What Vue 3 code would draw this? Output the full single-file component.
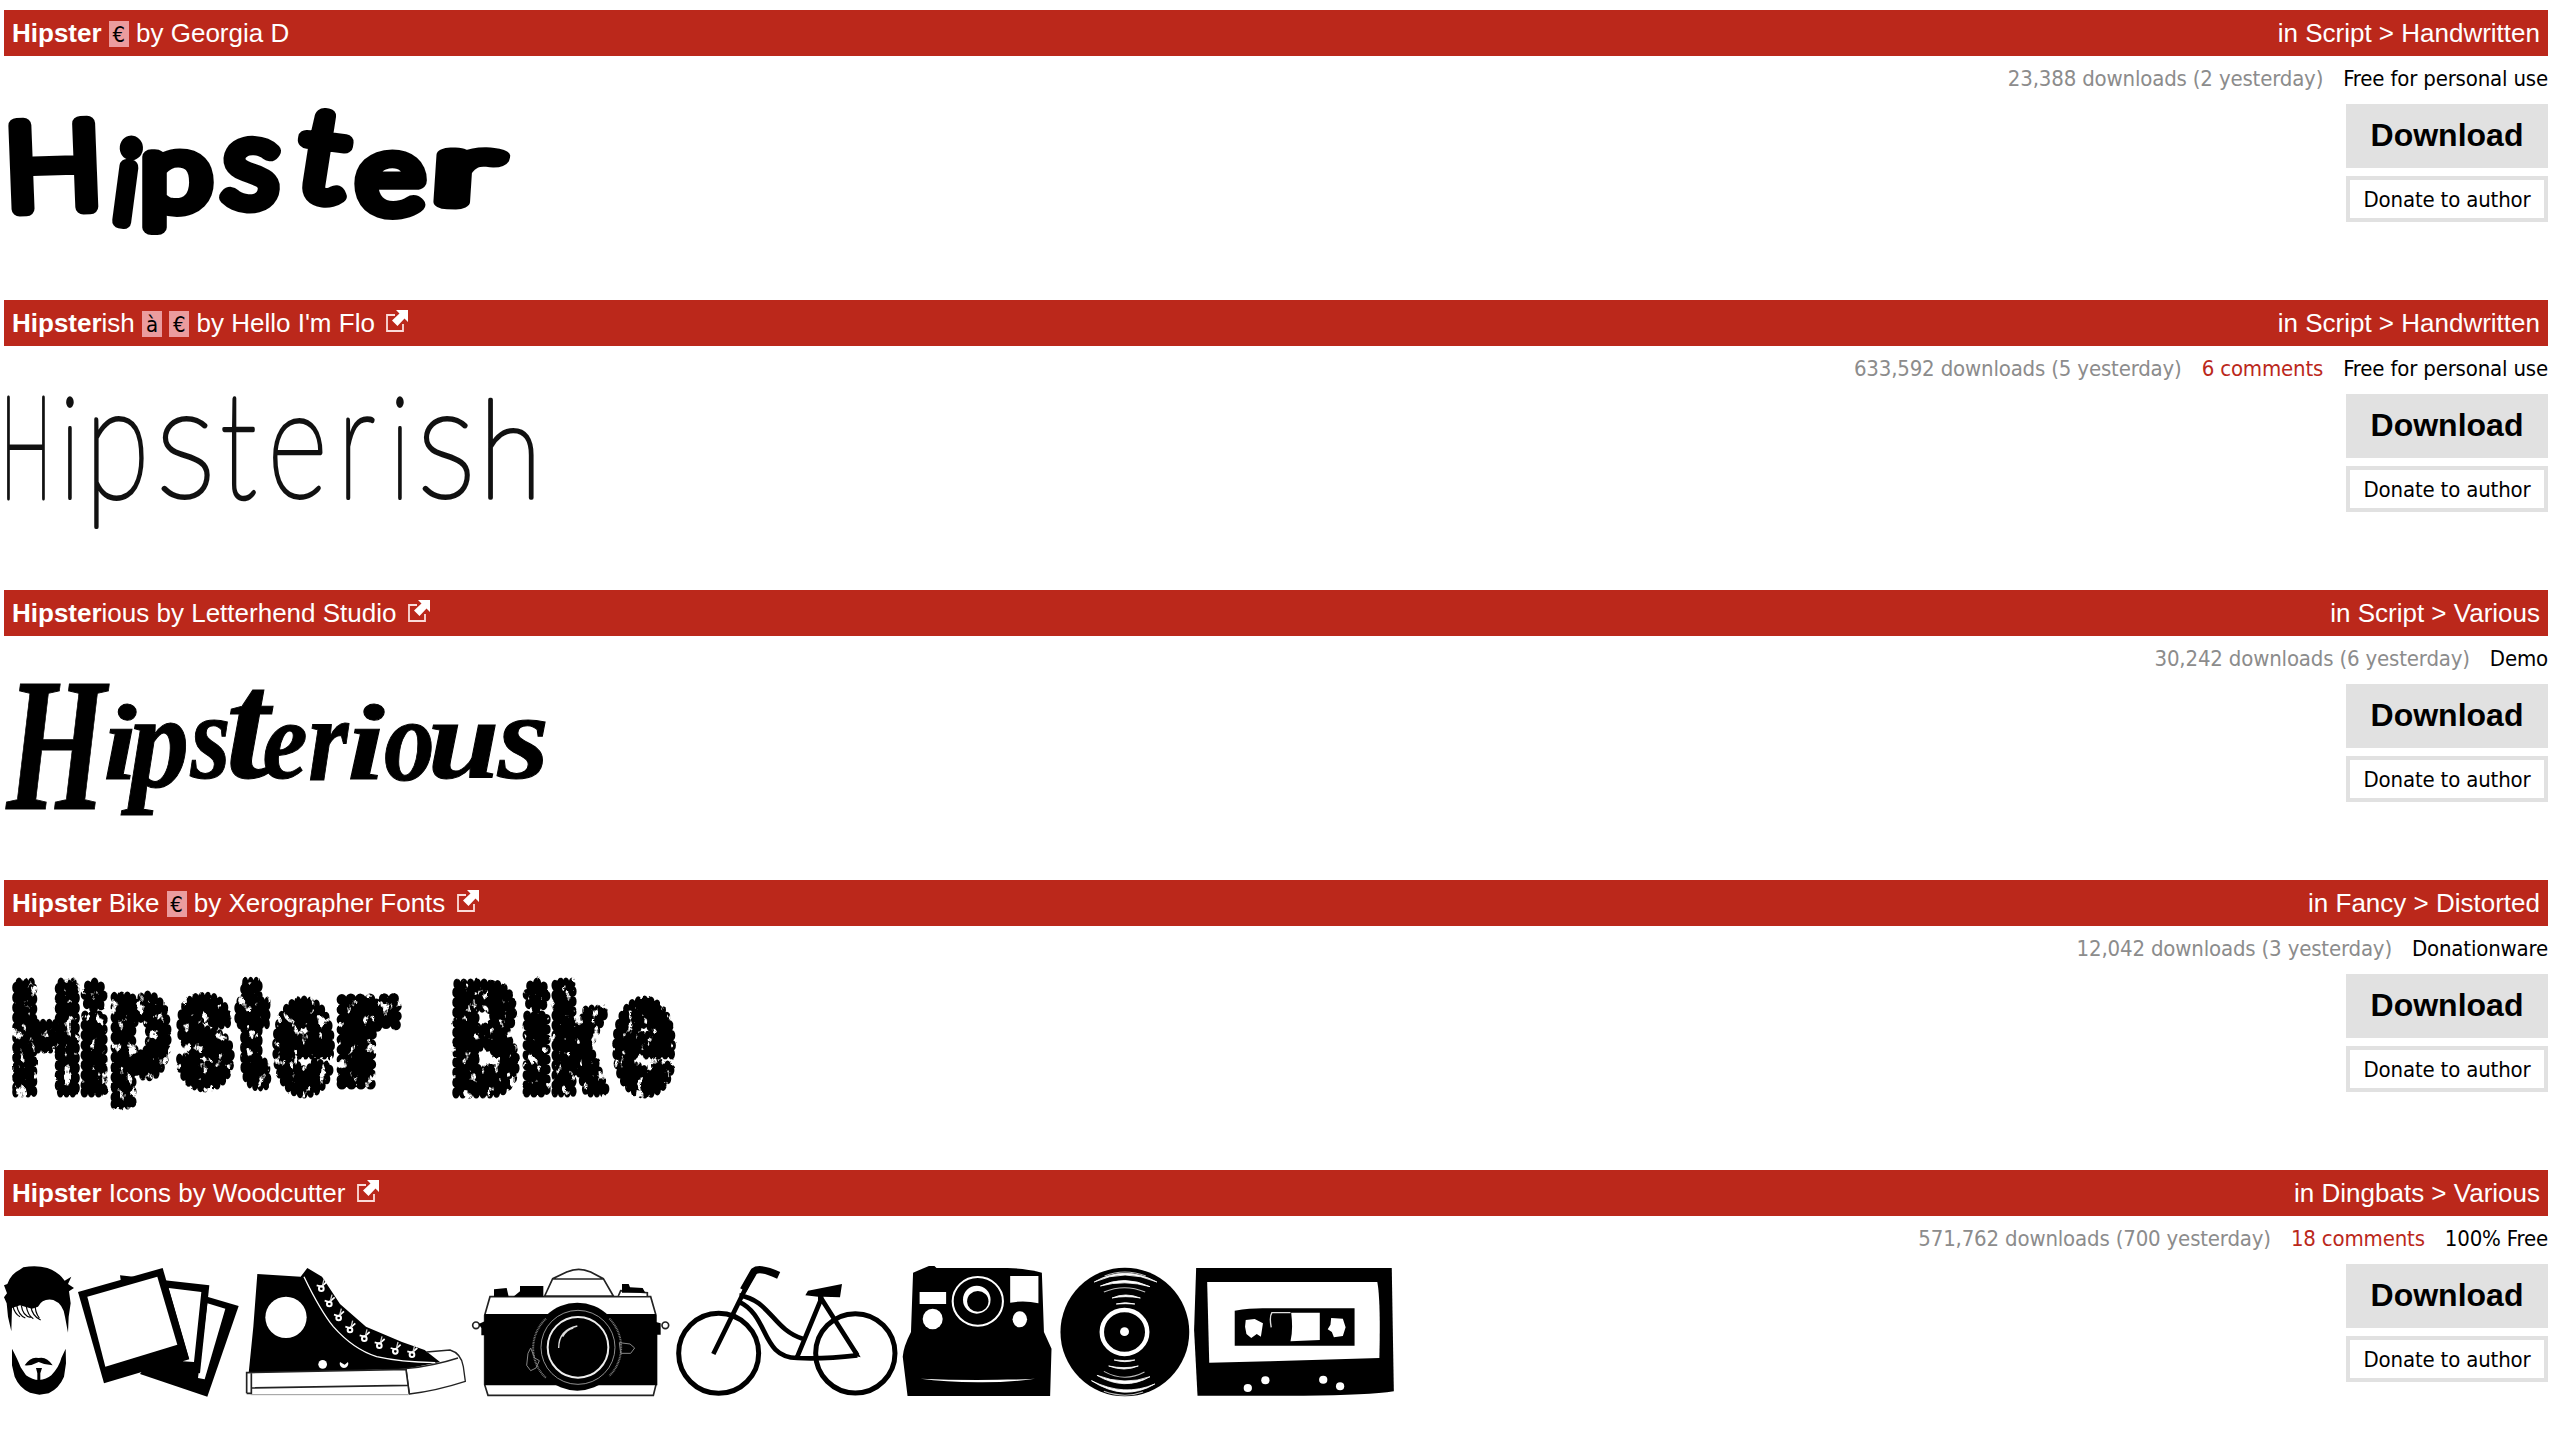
<script setup>
const canvas = document.createElement('canvas').getContext('2d')

// Fits every glyph of a word into its [left, top, right, bottom] box.
function fit(font, stroke, boxes) {
  return boxes.map(([char, left, top, right, bottom, turn = 0]) => {
    canvas.font = font.replace('SIZE', '200px')
    const m = canvas.measureText(char)
    const size = (200 * (bottom - top - stroke)) / (m.actualBoundingBoxAscent + m.actualBoundingBoxDescent)
    const s = size / 200
    const inkWidth = (m.actualBoundingBoxRight + m.actualBoundingBoxLeft) * s
    const k = (right - left) / (inkWidth + stroke)
    return {
      char,
      size,
      turn,
      x: left + k * (stroke / 2 + m.actualBoundingBoxLeft * s),
      y: bottom - stroke / 2 - m.actualBoundingBoxDescent * s,
      length: m.width * s * k
    }
  })
}

const fonts = [
  {
    bold: 'Hipster', rest: '', badges: ['€'], author: 'Georgia D', link: false,
    category: 'Script', sub: 'Handwritten', downloads: '23,388 downloads (2 yesterday)', license: 'Free for personal use',
    kind: 'marker',
    glyphs: fit('300 SIZE Lato', 15, [
      ['H', 11, 118, 99, 217, -2], ['i', 110, 133, 134, 227, 8], ['p', 142, 149, 214, 235],
      ['s', 218, 134, 279, 212, 4], ['t', 289, 105, 347, 204, 8], ['e', 354, 149, 427, 220], ['r', 433, 146, 508, 209, 2]
    ])
  },
  {
    bold: 'Hipster', rest: 'ish', badges: ['à', '€'], author: "Hello I'm Flo", link: true,
    category: 'Script', sub: 'Handwritten', downloads: '633,592 downloads (5 yesterday)', comments: '6 comments', license: 'Free for personal use',
    kind: 'thin',
    glyphs: fit('100 SIZE Lato', 4, [
      ['H', 7, 105, 45, 212], ['i', 66, 105, 74, 210], ['p', 94, 126, 144, 239],
      ['s', 161, 126, 210, 211], ['t', 222, 106, 256, 211], ['e', 273, 128, 323, 210],
      ['r', 346, 125, 375, 210], ['i', 396, 105, 404, 210], ['s', 422, 126, 470, 211], ['h', 488, 107, 534, 210]
    ])
  },
  {
    bold: 'Hipster', rest: 'ious', badges: [], author: 'Letterhend Studio', link: true,
    category: 'Script', sub: 'Various', downloads: '30,242 downloads (6 yesterday)', license: 'Demo',
    kind: 'script',
    glyphs: fit('italic bold SIZE "Liberation Serif"', 1, [
      ['H', 5, 103, 110, 229], ['i', 106, 124, 137, 200], ['p', 120, 143, 186, 236],
      ['s', 189, 140, 228, 200], ['t', 230, 110, 274, 200], ['e', 264, 145, 306, 200],
      ['r', 310, 142, 350, 200], ['i', 350, 124, 385, 200], ['o', 385, 144, 432, 202],
      ['u', 432, 145, 496, 200], ['s', 496, 140, 546, 200]
    ])
  },
  {
    bold: 'Hipster', rest: ' Bike', badges: ['€'], author: 'Xerographer Fonts', link: true,
    category: 'Fancy', sub: 'Distorted', downloads: '12,042 downloads (3 yesterday)', license: 'Donationware',
    kind: 'grunge',
    glyphs: fit('900 SIZE Inter', 11, [
      ['H', 12, 107, 80, 227], ['i', 80, 107, 108, 227], ['p', 110, 121, 172, 240],
      ['s', 175, 121, 235, 222], ['t', 234, 107, 272, 222], ['e', 272, 125, 335, 228], ['r', 336, 122, 402, 219],
      ['B', 452, 108, 520, 228], ['i', 522, 107, 551, 227], ['k', 551, 107, 611, 227], ['e', 612, 125, 676, 228]
    ])
  },
  {
    bold: 'Hipster', rest: ' Icons', badges: [], author: 'Woodcutter', link: true,
    category: 'Dingbats', sub: 'Various', downloads: '571,762 downloads (700 yesterday)', comments: '18 comments', license: '100% Free',
    kind: 'icons'
  }
]

const eyelets = [[968, 378], [992, 424], [1020, 466], [1054, 502], [1097, 528], [1142, 549], [1190, 566], [1240, 576]]
</script>

<template>
  <main class="page">
    <article v-for="f in fonts" :key="f.rest" class="font">
      <header class="bar">
        <div class="name">
          <b>{{ f.bold }}</b>{{ f.rest }}<template v-for="b in f.badges" :key="b">{{ ' ' }}<span class="badge">{{ b }}</span></template>
          by {{ f.author }}
          <svg v-if="f.link" class="ext" viewBox="0 0 22 22">
            <path d="M9 5H1V21H17V14" fill="none" stroke="#fbdcd9" stroke-width="1.8" />
            <path d="M10 0H22V12L18.5 8.5L11.5 16L6 10.5L13.5 3.5Z" fill="#fff" />
          </svg>
        </div>
        <div class="category">in {{ f.category }} &gt; {{ f.sub }}</div>
      </header>
      <div class="body">
        <svg v-if="f.glyphs" class="preview" :class="f.kind" viewBox="0 90 700 160" width="700" height="160">
          <defs v-if="f.kind === 'grunge'">
            <filter id="worn" x="0" y="90" width="700" height="160" filterUnits="userSpaceOnUse">
              <feTurbulence type="fractalNoise" baseFrequency="0.11 0.07" numOctaves="4" seed="8" result="noise" />
              <feColorMatrix in="noise" type="matrix" values="0 0 0 0 0  0 0 0 0 0  0 0 0 0 0  12 0 0 0 -7.7" result="specks" />
              <feComposite in="SourceGraphic" in2="specks" operator="out" result="worn" />
              <feDisplacementMap in="worn" in2="noise" scale="2" xChannelSelector="R" yChannelSelector="G" />
            </filter>
          </defs>
          <text><template v-for="(g, i) in f.glyphs" :key="i"><tspan
            :x="g.x" :y="g.y" :rotate="g.turn" :textLength="g.length" lengthAdjust="spacingAndGlyphs"
            :style="{ fontSize: g.size + 'px' }">{{ g.char }}</tspan></template></text>
        </svg>
        <svg v-else class="preview" viewBox="0 90 1450 160" width="1450" height="160">
          <g transform="scale(.33333)">
            <!-- bearded head -->
            <path d="M22 372Q32 342 58 330L70 322Q108 314 142 324Q176 336 194 362L214 350L204 372L222 384L207 394L212 430L206 470L204 518L195 470Q190 432 160 420Q128 414 114 440L96 446L60 436L36 444L34 514L24 470L20 430L12 412L21 400L12 376Z" />
            <path d="M38 436Q44 462 60 470M50 436Q56 466 76 474M64 436Q68 468 92 472M78 436Q84 468 100 476M92 436Q96 468 122 480M106 432Q104 456 118 474" fill="none" stroke="#000" stroke-width="3.5" />
            <path d="M36 566Q54 600 62 622L78 646Q98 660 116 660Q140 658 154 646Q178 620 184 594L197 566L198 610L192 650Q178 684 146 700L118 704L90 698Q58 684 44 650L36 616Z" />
            <path d="M74 616Q92 588 116 594Q140 588 158 616Q136 616 116 606Q94 618 74 616ZM108 624H126L121 640V662H112V640Z" />
            <!-- snapshots -->
            <path d="M586 400L716 438L622 710L420 642Z" />
            <path d="M622 430L676 446L614 658L594 654Z" fill="#fff" />
            <path d="M360 346L628 376L600 640L400 620Z" />
            <path d="M506 384L604 396L582 606L548 604L568 598Z" fill="#fff" />
            <path d="M234 396L488 324L566 594L312 670Z" />
            <path d="M262 410L472 350L532 554L316 620Z" fill="#fff" />
            <!-- high-top shoe -->
            <path d="M772 342L902 350L922 324L966 350L1020 432L1098 500L1206 546L1274 570L1320 606L1220 626L746 640L760 500Z" />
            <circle cx="858" cy="472" r="62" fill="#fff" />
            <path d="M912 350Q960 450 1000 500Q1060 568 1130 590Q1200 606 1306 608" fill="none" stroke="#fff" stroke-width="4" />
            <path d="M1280 576L1350 570Q1384 580 1390 620L1396 664Q1310 692 1228 702L1218 626Q1300 618 1374 594" fill="#fff" stroke="#222" stroke-width="4" />
            <path d="M738 638L1218 628L1226 704H740Z" fill="#fff" />
            <path d="M740 700V638L1218 628L1228 702M754 640V700L740 700M752 684L1222 676" fill="none" stroke="#222" stroke-width="5" />
            <path d="M752 704H1226" stroke="#999" stroke-width="3" />
            <circle cx="968" cy="613" r="13" fill="#fff" />
            <path d="M1020 606A13 13 0 1 0 1044 606L1034 614Z" fill="#fff" />
            <g v-for="([x, y], i) in eyelets" :key="i" fill="none" stroke="#fff">
              <path :d="`M${x - 18} ${y - 2}L${x - 4} ${y + 2}L${x + 12} ${y - 12}`" stroke-width="5" />
              <path :d="`M${x + 4} ${y - 20}L${x - 2} ${y + 4}`" stroke="#ccc" stroke-width="4" />
              <circle :cx="x - 4" :cy="y + 8" r="7" stroke-width="6" />
            </g>
          </g>
          <!-- film camera -->
          <g transform="translate(460 80) scale(.33333)">
            <g fill="#fff" stroke="#222" stroke-width="5">
              <path d="M90 170H572L588 226V434L580 466H84L74 434V226Z" />
              <path d="M254 168L278 116L320 96Q356 80 392 96L430 116L460 168ZM278 117H430M475 168L482 152L562 158V168" />
              <circle cx="48" cy="256" r="10" /><circle cx="616" cy="256" r="10" />
            </g>
            <path d="M74 222H588V246L602 250V284H592V436H74V286H64V264L56 252L74 244ZM102 148L140 144L146 170H102ZM160 170L180 154V138H250V170ZM486 132H506L510 142L548 144L556 158H486Z" />
            <circle cx="352" cy="320" r="132" />
            <g fill="none" stroke="#ddd">
              <circle cx="354" cy="322" r="91" stroke="#eee" stroke-width="6" />
              <circle cx="354" cy="322" r="111" stroke="#aaa" stroke-width="2.5" />
              <path d="M258 236A122 122 0 0 0 258 414M448 236A122 122 0 0 1 448 408" stroke="#777" stroke-width="6" stroke-dasharray="3 2" />
              <path d="M296 324Q296 270 352 258M308 290Q320 268 340 264" stroke-width="4" />
              <path d="M212 324L204 340L200 376L212 392L228 384L238 362L224 354ZM478 308L510 312L524 324L512 340H482Z" stroke="#888" stroke-width="3" />
            </g>
            <!-- bicycle -->
            <g fill="none" stroke="#000" stroke-width="15">
              <circle cx="776" cy="340" r="120" /><circle cx="1186" cy="340" r="119" />
              <path d="M760 342L884 90M1012 350L1084 176L1192 346M838 166C930 180 940 270 1028 296M834 184C930 226 900 352 1012 354Q1090 358 1192 346" stroke-width="14" />
              <path d="M850 150L882 94Q900 80 956 106" stroke-width="22" />
            </g>
            <path d="M1036 166L1044 152L1146 132L1140 172L1090 170V184H1074V170ZM1176 346L1190 330L1202 352Z" />
          </g>
          <g transform="translate(880 80) scale(.34439 .33333)">
            <!-- instant camera -->
            <path d="M96 98L142 78H158L164 84H370Q430 86 470 98L476 276L498 326L494 468H80L66 350Q68 320 90 276Z" />
            <g fill="#fff">
              <path d="M115 156H192V192H115ZM378 108H460V190Q420 180 378 188ZM118 416Q280 424 450 416Q370 428 284 427Q190 426 118 416Z" />
              <ellipse cx="153" cy="237" rx="29" ry="31" /><ellipse cx="406" cy="238" rx="21" ry="24" />
              <ellipse cx="281" cy="179" rx="40" ry="42" />
            </g>
            <circle cx="284" cy="184" r="31" />
            <circle cx="284" cy="184" r="73" fill="none" stroke="#fff" stroke-width="6" />
            <!-- vinyl record -->
            <ellipse cx="711" cy="276" rx="187" ry="193" />
            <circle cx="710" cy="276" r="66" fill="none" stroke="#fff" stroke-width="13" />
            <circle cx="710" cy="275" r="13" fill="#fff" />
            <g fill="#fff" stroke="#fff" stroke-width="2.5">
              <path d="M622 126Q710 74 804 126Q710 84 622 126ZM640 138Q710 104 784 140Q710 118 640 138ZM674 174Q712 156 756 174Q712 166 674 174ZM686 192Q712 184 740 192Q712 190 686 192ZM614 422Q710 486 798 432Q710 472 614 422ZM630 406Q710 454 784 410Q710 438 630 406ZM664 378Q710 396 750 378Q710 388 664 378ZM680 360Q712 370 740 360Q712 364 680 360Z" />
              <path d="M650 156Q710 130 770 156M650 394Q710 428 768 396M652 108Q710 84 772 108M650 454Q710 476 764 456" fill="none" stroke="#bbb" stroke-width="3" />
            </g>
            <!-- cassette -->
            <path d="M918 84H1486L1492 454Q1420 466 1230 467H922L912 270Z" />
            <path d="M950 126H1444Q1454 180 1450 354L1130 364L956 368Z" fill="#fff" />
            <path d="M1030 212Q1080 204 1120 205H1378V317H1030Z" />
            <g fill="#fff">
              <path d="M1194 218H1277V300L1192 304Q1200 270 1194 218ZM1062 240L1088 237L1112 250L1106 290L1094 282L1078 294L1064 282L1060 260ZM1310 234L1344 236L1352 262L1344 288L1318 292L1312 276L1300 268L1308 254Z" />
              <circle cx="1068" cy="444" r="12" /><circle cx="1119" cy="421" r="12" />
              <circle cx="1287" cy="419" r="12" /><circle cx="1336" cy="439" r="12" />
            </g>
            <path d="M1192 218H1138Q1130 230 1136 262" fill="none" stroke="#ddd" stroke-width="4" />
          </g>
        </svg>
        <div class="side">
          <div class="stats">
            <span class="downloads">{{ f.downloads }}</span>
            <span v-if="f.comments" class="comments">{{ f.comments }}</span>
            <span>{{ f.license }}</span>
          </div>
          <a class="download">Download</a>
          <a class="donate">Donate to author</a>
        </div>
      </div>
    </article>
  </main>
</template>

<style>
body {
  background: #fff;
}
</style>

<style scoped>
.page {
  width: 2570px;
  height: 1432px;
  overflow: hidden;
  color: #000;
  font-family: "DejaVu Sans Condensed", "DejaVu Sans", sans-serif;
  font-stretch: condensed;
  font-size: 22px;
  letter-spacing: -0.17px;
}
.font {
  box-sizing: border-box;
  height: 290px;
  padding: 10px 22px 0 4px;
}
.bar {
  display: flex;
  justify-content: space-between;
  box-sizing: border-box;
  height: 46px;
  padding: 0 8px;
  background: #bb281b;
  color: #fff;
  font: 26px/46px "Liberation Sans", Arial, sans-serif;
  letter-spacing: 0;
  white-space: nowrap;
}
.badge {
  display: inline-block;
  width: 20px;
  height: 26px;
  background: #eb9c9e;
  color: #000;
  font: 22px/27px "DejaVu Sans Condensed", "DejaVu Sans", sans-serif;
  font-stretch: condensed;
  text-align: center;
}
.ext {
  width: 22px;
  height: 22px;
  margin-left: 4px;
}
.body {
  display: flex;
  justify-content: space-between;
  height: 234px;
}
.preview {
  flex: none;
  margin: 34px 0 0 -4px;
  overflow: visible;
  letter-spacing: 0;
}
.marker text {
  font-family: Lato, sans-serif;
  font-weight: 300;
  stroke: #000;
  stroke-width: 15px;
  stroke-linejoin: round;
}
.thin text {
  font-family: Lato, sans-serif;
  font-weight: 100;
  fill: #111;
  stroke: #111;
  stroke-width: 4px;
  stroke-linejoin: round;
}
.script text {
  font-family: "Liberation Serif", serif;
  font-style: italic;
  font-weight: bold;
  stroke: #000;
  stroke-width: 1px;
}
.grunge text {
  font-family: Inter, sans-serif;
  font-weight: 900;
  stroke: #000;
  stroke-width: 11px;
  stroke-linecap: round;
  stroke-dasharray: 0 10;
  filter: url(#worn);
}
.side {
  display: flex;
  flex-direction: column;
  align-items: flex-end;
}
.stats {
  display: flex;
  gap: 20px;
  height: 48px;
  line-height: 46px;
  white-space: nowrap;
}
.downloads {
  color: #8c8c8c;
}
.comments {
  color: #bb281b;
}
.download {
  width: 202px;
  height: 64px;
  background: #e1e1e1;
  font: bold 32px/62px "Liberation Sans", Arial, sans-serif;
  letter-spacing: 0;
  text-align: center;
}
.donate {
  box-sizing: border-box;
  width: 202px;
  height: 46px;
  margin-top: 8px;
  border: 4px solid #e1e1e1;
  line-height: 39px;
  text-align: center;
}
</style>
